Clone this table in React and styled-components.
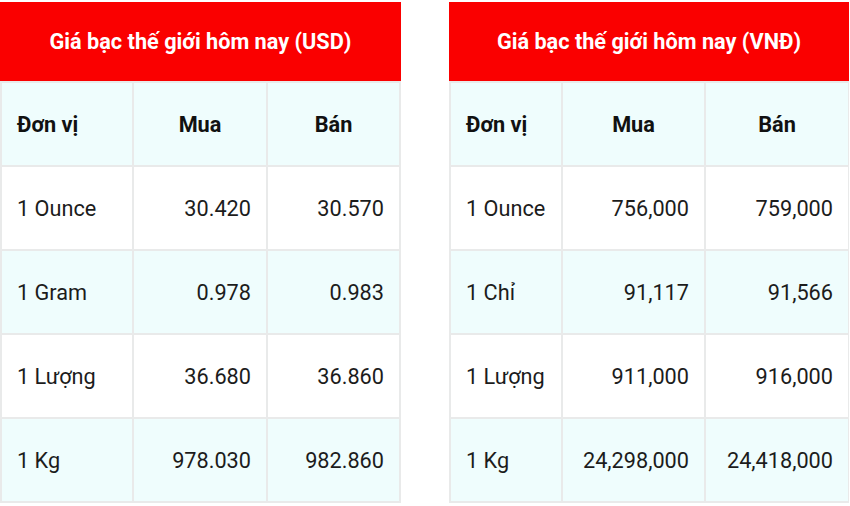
import React from "react";
import styled, { createGlobalStyle } from "styled-components";

const Global = createGlobalStyle`
  html, body { margin: 0; padding: 0; background: #ffffff; }
  body { font-family: Roboto, "Noto Sans", "Liberation Sans", sans-serif; }
`;

const Page = styled.div`
  display: flex;
  align-items: flex-start;
  gap: 48px;
  padding-top: 2px;
  width: 850px;
  height: 506px;
  box-sizing: border-box;
`;

const Card = styled.section`
  display: flex;
  flex-direction: column;
  width: ${(p) => p.$width}px;
`;

const Title = styled.div`
  height: 79px;
  background: #fa0000;
  color: #ffffff;
  font-weight: 700;
  font-size: 21.7px;
  display: flex;
  align-items: center;
  justify-content: center;
`;

const Grid = styled.div`
  display: grid;
  grid-template-columns: ${(p) => p.$cols};
  grid-auto-rows: 82px;
  gap: 2px;
  padding: 2px;
  background: #e9eaea;
`;

const Cell = styled.div`
  display: flex;
  align-items: center;
  justify-content: ${(p) => (p.$align === "left" ? "flex-start" : p.$align === "center" ? "center" : "flex-end")};
  padding: 0 15px;
  background: ${(p) => (p.$tint ? "#effdfd" : "#ffffff")};
  font-size: 21.7px;
  font-weight: ${(p) => (p.$bold ? 700 : 400)};
  color: ${(p) => (p.$bold ? "#111111" : "#1c1c1c")};
  white-space: nowrap;
`;

const tables = [
  {
    title: "Giá bạc thế giới hôm nay (USD)",
    width: 401,
    cols: "130px 132px 131px",
    rows: [
      ["1 Ounce", "30.420", "30.570"],
      ["1 Gram", "0.978", "0.983"],
      ["1 Lượng", "36.680", "36.860"],
      ["1 Kg", "978.030", "982.860"],
    ],
  },
  {
    title: "Giá bạc thế giới hôm nay (VNĐ)",
    width: 400,
    cols: "110px 141px 142px",
    rows: [
      ["1 Ounce", "756,000", "759,000"],
      ["1 Chỉ", "91,117", "91,566"],
      ["1 Lượng", "911,000", "916,000"],
      ["1 Kg", "24,298,000", "24,418,000"],
    ],
  },
];

function PriceTable({ t }) {
  return (
    <Card $width={t.width}>
      <Title>{t.title}</Title>
      <Grid $cols={t.cols}>
        <Cell $tint $bold $align="left">Đơn vị</Cell>
        <Cell $tint $bold $align="center">Mua</Cell>
        <Cell $tint $bold $align="center">Bán</Cell>
        {t.rows.map((r, i) => (
          <React.Fragment key={i}>
            <Cell $tint={i % 2 === 1} $align="left">{r[0]}</Cell>
            <Cell $tint={i % 2 === 1} $align="right">{r[1]}</Cell>
            <Cell $tint={i % 2 === 1} $align="right">{r[2]}</Cell>
          </React.Fragment>
        ))}
      </Grid>
    </Card>
  );
}

export default function App() {
  return (
    <>
      <Global />
      <Page>
        {tables.map((t) => (
          <PriceTable key={t.title} t={t} />
        ))}
      </Page>
    </>
  );
}
